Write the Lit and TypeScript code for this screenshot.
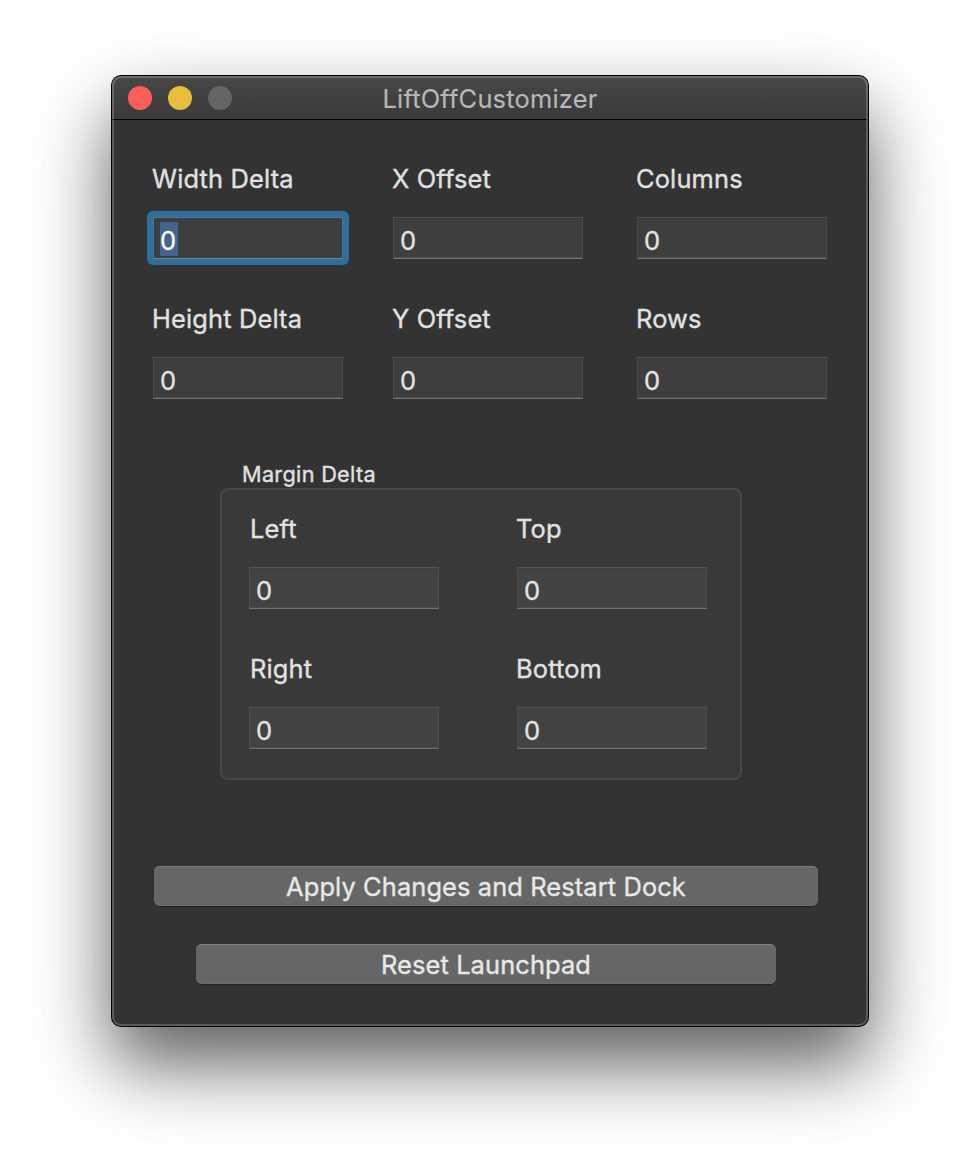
import { LitElement, html, css } from "lit";
import { customElement, property } from "lit/decorators.js";

@customElement("number-field")
class NumberField extends LitElement {
  @property() label = "";
  @property() value = "0";
  @property({ type: Boolean, reflect: true }) active = false;

  static styles = css`
    :host { display: block; width: 190px; height: 96px; }
    .label { height: 32px; line-height: 32px; margin: 0 0 16px var(--label-shift, -1px); white-space: nowrap; }
    .ring { padding: 6px; margin: 0 -6px; border-radius: 6px; }
    .field {
      box-sizing: border-box; width: 190px; height: 42px; padding: 5px 0 0 7px;
      background: var(--field, #3e3e3e);
      border: 1px solid var(--edge, #4b4b4b); border-top-color: var(--edge-top, #515151);
      border-bottom-color: #737373;
      box-shadow: inset 0 -1px 0 var(--edge, #4b4b4b), inset 0 1px 1px rgba(0, 0, 0, 0.08);
    }
    .digit { display: inline-block; width: 18px; height: 34px; line-height: 36px; margin-left: -1px; font-size: 25.5px; color: #e3e3e3; }
    :host([active]) .ring { background: #2f6e99; }
    :host([active]) .field { border: 1px solid #3d7ca5; border-bottom-color: #5f8aa6; padding-top: 4px; box-shadow: none; }
    :host([active]) .digit { background: #43648d; color: #fff; line-height: 38px; }
  `;

  render() {
    return html`<div class="label">${this.label}</div>
      <div class="ring">
        <div class="field"><span class="digit">${this.value}</span></div>
      </div>`;
  }
}

@customElement("app-root")
class AppRoot extends LitElement {
  static styles = css`
    :host { display: block; height: 1174px; background: #fff; overflow: hidden; font-family: Inter, "Liberation Sans", sans-serif; font-size: 25.4px; font-weight: 400; letter-spacing: 0.16px; -webkit-text-stroke: 0.35px; color: #e1e1e1; }
    .desktop { box-sizing: border-box; height: 1174px; padding: 76px 112px; }
    .window {
      box-sizing: border-box; width: 756px; height: 950px; border-radius: 9px; background: #333;
      box-shadow: 0 0 0 1px #000, 0 37px 68px -2px rgba(0, 0, 0, 0.54), 0 38px 100px rgba(0, 0, 0, 0.18);
      position: relative;
    }
    .rim { position: absolute; inset: 0; border: 2px solid rgba(255, 255, 255, 0.2); border-radius: 9px; pointer-events: none; }
    .titlebar {
      box-sizing: border-box; height: 44px; border-bottom: 1px solid #000; border-radius: 9px 9px 0 0;
      background: linear-gradient(#484848, #3a3a3a);
      display: grid; grid-template-columns: 104px 1fr 104px; align-items: start; padding: 0 16px;
    }
    .lights { display: flex; gap: 16px; padding-top: 10px; }
    .light { width: 24px; height: 24px; border-radius: 50%; }
    .close { background: #ff5c5a; }
    .minimize { background: #e5bf3c; }
    .zoom { background: #656565; }
    .title { text-align: center; letter-spacing: 0.22px; -webkit-text-stroke: 0.15px; color: #b7b7b7; line-height: 46px; height: 43px; white-space: nowrap; }
    .fields { display: grid; grid-template-columns: 240px 244px 190px; row-gap: 44px; padding: 43px 0 0 41px; }
    .caption { margin: 62px 0 0 130px; height: 27px; line-height: 27px; font-size: 21.7px; letter-spacing: 0.3px; white-space: nowrap; }
    .group {
      box-sizing: border-box; width: 522px; height: 292px; margin-left: 108px; padding: 23px 0 0 27px;
      background: #393939; border: 2px solid #484848; border-radius: 8px;
      display: grid; grid-template-columns: 268px 190px; row-gap: 44px; align-content: start;
      --field: #434343; --edge: #4e4e4e; --edge-top: #545454;
    }
    .inset { --label-shift: 1px; }
    .actions { display: flex; flex-direction: column; align-items: center; gap: 38px; margin: 86px 8px 0 0; }
    .button {
      box-sizing: border-box; width: 580px; height: 40px; border: 0; border-radius: 6px; padding: 2px 0 0; margin: 0;
      background: #666; box-shadow: inset 0 1px 0 #808080, inset 0 -1px 0 #6c6c6c, 0 1px 1px rgba(0, 0, 0, 0.35);
      font: inherit; letter-spacing: 0.12px; color: #e8e8e8; line-height: 38px; text-align: center; white-space: nowrap;
    }
    .wide { width: 664px; }
  `;

  render() {
    return html`<div class="desktop">
      <div class="window">
        <div class="titlebar">
          <div class="lights">
            <div class="light close"></div>
            <div class="light minimize"></div>
            <div class="light zoom"></div>
          </div>
          <div class="title">LiftOffCustomizer</div>
        </div>
        <div class="fields">
          <number-field label="Width Delta" active></number-field>
          <number-field label="X Offset"></number-field>
          <number-field label="Columns"></number-field>
          <number-field label="Height Delta"></number-field>
          <number-field label="Y Offset"></number-field>
          <number-field label="Rows"></number-field>
        </div>
        <div class="caption">Margin Delta</div>
        <div class="group">
          <number-field class="inset" label="Left"></number-field>
          <number-field label="Top"></number-field>
          <number-field class="inset" label="Right"></number-field>
          <number-field label="Bottom"></number-field>
        </div>
        <div class="actions">
          <button class="button wide">Apply Changes and Restart Dock</button>
          <button class="button">Reset Launchpad</button>
        </div>
        <div class="rim"></div>
      </div>
    </div>`;
  }
}
